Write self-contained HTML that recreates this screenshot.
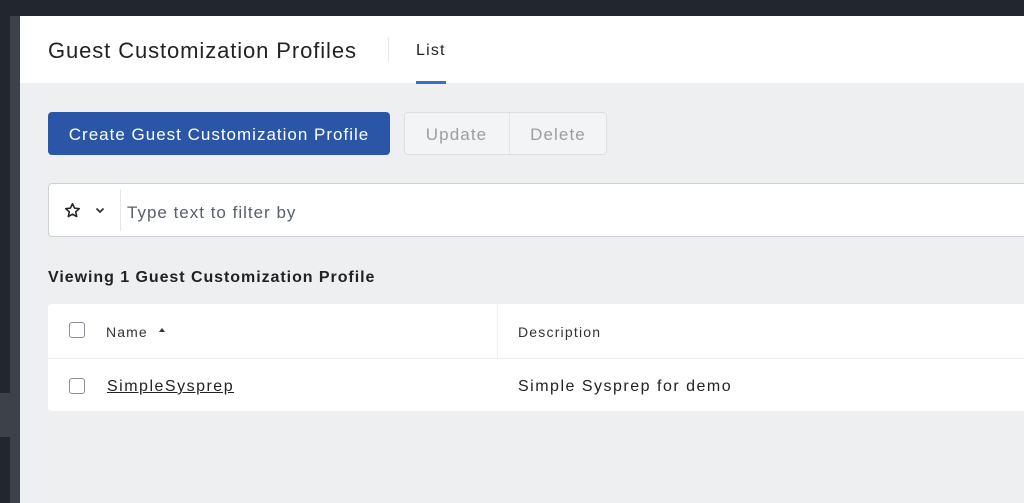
<!DOCTYPE html>
<html><head><style>
*{margin:0;padding:0;box-sizing:border-box}
body{width:1024px;height:503px;overflow:hidden;background:#22262e;font-family:"Liberation Sans",sans-serif;position:relative}
.abs{position:absolute;white-space:nowrap}
.cb{position:absolute;width:16px;height:16px;border:1.5px solid #8a8f98;border-radius:3px;background:#fff}
</style></head><body>
<div class="abs" style="left:10px;top:16px;width:10px;height:487px;background:#3c414a"></div>
<div class="abs" style="left:0;top:393px;width:10px;height:44px;background:#3c414a"></div>
<div class="abs" style="left:20px;top:16px;width:1004px;height:487px;background:#eeeff1"></div>
<div class="abs" style="left:20px;top:16px;width:1004px;height:67px;background:#fff"></div>
<div class="abs" style="left:48px;top:38px;font-size:22px;color:#222;letter-spacing:0.9px">Guest Customization Profiles</div>
<div class="abs" style="left:388px;top:38px;width:1px;height:24px;background:#e5e5e5"></div>
<div class="abs" style="left:416px;top:42px;font-size:16px;color:#222;letter-spacing:1.2px">List</div>
<div class="abs" style="left:416px;top:81px;width:30px;height:3px;background:#3b6fc6"></div>

<div class="abs" style="left:48px;top:112px;width:342px;height:43px;background:#2b56a8;border-radius:4px;color:#fff;font-size:17px;line-height:45px;text-align:center;letter-spacing:1px">Create Guest Customization Profile</div>
<div class="abs" style="left:404px;top:112px;width:203px;height:43px;background:#f3f4f5;border:1px solid #dcdee1;border-radius:4px"></div>
<div class="abs" style="left:509px;top:113px;width:1px;height:41px;background:#e3e4e6"></div>
<div class="abs" style="left:404px;top:112px;width:105px;line-height:45px;text-align:center;font-size:17px;color:#9a9da2;letter-spacing:1.1px">Update</div>
<div class="abs" style="left:509px;top:112px;width:98px;line-height:45px;text-align:center;font-size:17px;color:#9a9da2;letter-spacing:1.1px">Delete</div>

<div class="abs" style="left:48px;top:183px;width:990px;height:54px;background:#fff;border:1px solid #cdd0d4;border-radius:4px"></div>
<svg class="abs" style="left:64px;top:202px" width="17" height="17" viewBox="0 0 24 24"><path d="M12 2.5l2.9 6.1 6.6.8-4.9 4.5 1.3 6.6L12 17.2l-5.9 3.3 1.3-6.6-4.9-4.5 6.6-.8z" fill="none" stroke="#222" stroke-width="2.2" stroke-linejoin="round"/></svg>
<svg class="abs" style="left:95px;top:207px" width="10" height="7" viewBox="0 0 10 7"><path d="M1.5 1.5L5 5l3.5-3.5" fill="none" stroke="#333" stroke-width="1.8"/></svg>
<div class="abs" style="left:120px;top:189px;width:1px;height:42px;background:#e5e6e8"></div>
<div class="abs" style="left:127px;top:203px;font-size:17px;color:#58606b;letter-spacing:1px">Type text to filter by</div>

<div class="abs" style="left:48px;top:269px;font-size:16px;font-weight:bold;color:#222;letter-spacing:0.95px">Viewing 1 Guest Customization Profile</div>

<div class="abs" style="left:48px;top:304px;width:990px;height:107px;background:#fff;border-radius:4px"></div>
<div class="abs" style="left:48px;top:358px;width:990px;height:1px;background:#eceef0"></div>
<div class="abs" style="left:497px;top:304px;width:1px;height:54px;background:#eceef0"></div>
<div class="cb" style="left:69px;top:322px"></div>
<div class="abs" style="left:106px;top:324px;font-size:14px;color:#333;letter-spacing:1.1px">Name</div>
<div class="abs" style="left:159px;top:328px;width:0;height:0;border-left:3px solid transparent;border-right:3px solid transparent;border-bottom:4px solid #333"></div>
<div class="abs" style="left:518px;top:324px;font-size:14px;color:#333;letter-spacing:1.2px">Description</div>
<div class="cb" style="left:69px;top:378px"></div>
<div class="abs" style="left:107px;top:378px;font-size:16px;color:#222;text-decoration:underline;letter-spacing:1.5px">SimpleSysprep</div>
<div class="abs" style="left:518px;top:378px;font-size:16px;color:#222;letter-spacing:1.5px">Simple Sysprep for demo</div>
</body></html>
